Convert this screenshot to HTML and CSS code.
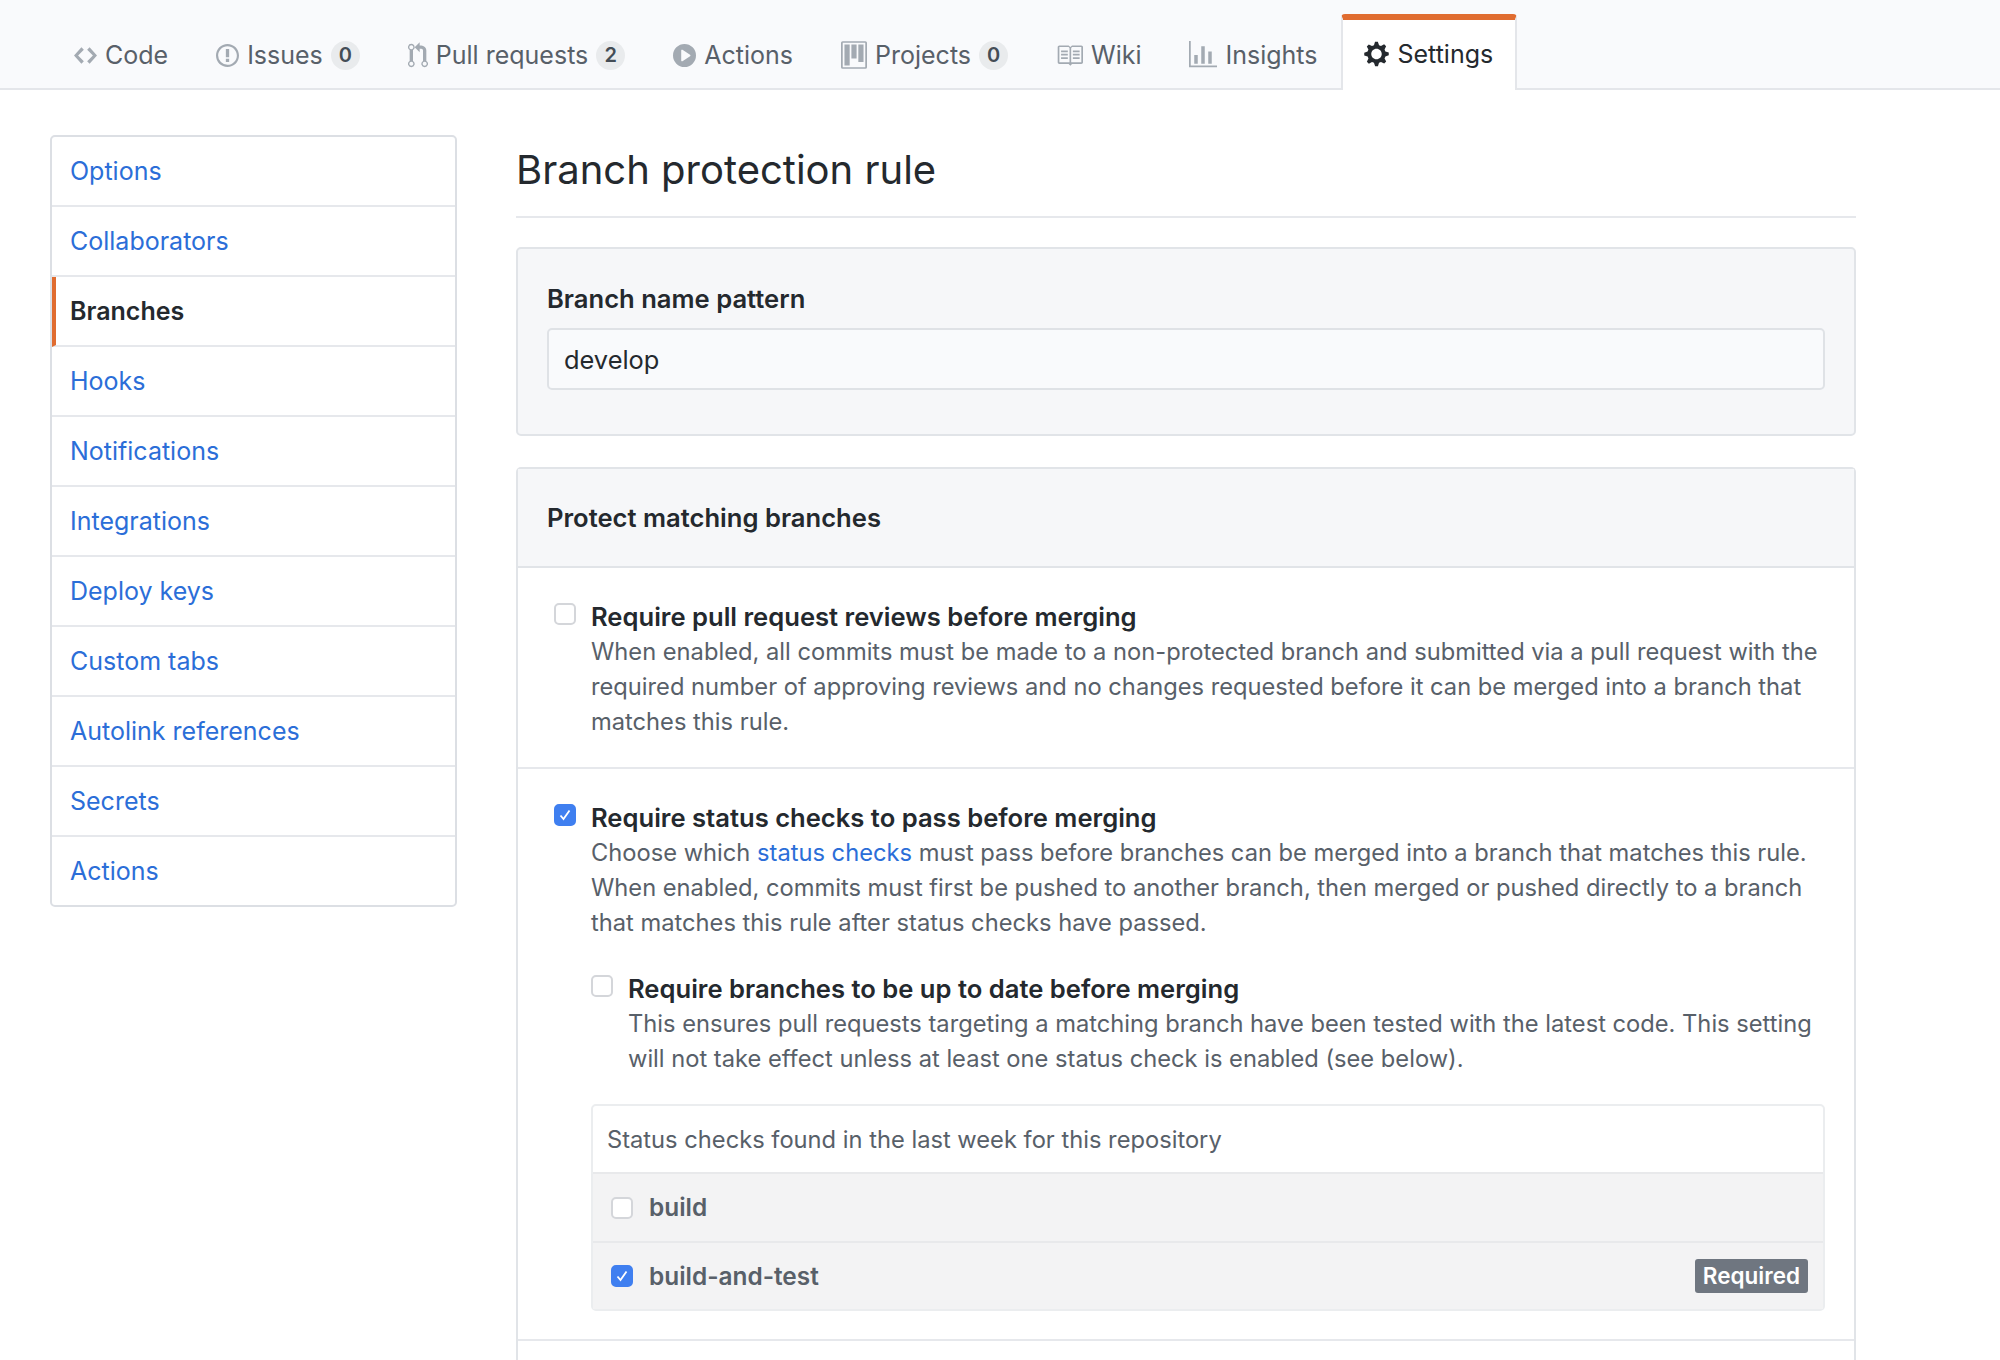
FILE: index.html
```html
<!DOCTYPE html>
<html lang="en">
<head>
    <meta charset="UTF-8">
    <title>Branch protection rule</title>
    <link rel="stylesheet" href="styles.css">
</head>
<body>
    <!-- Repo tabs -->
    <nav class="repo-nav">
        <a class="repo-tab" href="#">
            <svg class="tab-icon" width="23" height="27" viewBox="0 0 14 16"><path d="M9.5 3L8 4.5 11.5 8 8 11.5 9.5 13 14 8 9.5 3zm-5 0L0 8l4.5 5L6 11.5 2.5 8 6 4.5 4.5 3z"/></svg>
            <span>Code</span>
        </a>
        <a class="repo-tab" href="#">
            <svg class="tab-icon" width="23" height="27" viewBox="0 0 14 16"><path d="M7 2.3c3.14 0 5.7 2.56 5.7 5.7s-2.56 5.7-5.7 5.7A5.71 5.71 0 0 1 1.3 8c0-3.14 2.56-5.7 5.7-5.7zM7 1C3.14 1 0 4.14 0 8s3.14 7 7 7 7-3.14 7-7-3.14-7-7-7zm1 3H6v5h2V4zm0 6H6v2h2v-2z"/></svg>
            <span>Issues</span>
            <span class="counter">0</span>
        </a>
        <a class="repo-tab" href="#">
            <svg class="tab-icon" width="20" height="27" viewBox="0 0 12 16"><path d="M11 11.28V5c-.03-.78-.34-1.47-.94-2.06C9.46 2.35 8.78 2.03 8 2H7V0L4 3l3 3V4h1c.27.02.48.11.69.31.21.2.3.42.31.69v6.28A1.993 1.993 0 0 0 10 15a1.993 1.993 0 0 0 1-3.72zm-1 2.92c-.66 0-1.2-.55-1.2-1.2 0-.65.55-1.2 1.2-1.2.65 0 1.2.55 1.2 1.2 0 .65-.55 1.2-1.2 1.2zM4 3c0-1.11-.89-2-2-2a1.993 1.993 0 0 0-1 3.72v6.56A1.993 1.993 0 0 0 2 15a1.993 1.993 0 0 0 1-3.72V4.72c.59-.34 1-.98 1-1.72zm-.8 10c0 .66-.55 1.2-1.2 1.2-.65 0-1.2-.55-1.2-1.2 0-.65.55-1.2 1.2-1.2.65 0 1.2.55 1.2 1.2zM2 4.2C1.34 4.2.8 3.65.8 3c0-.65.55-1.2 1.2-1.2.65 0 1.2.55 1.2 1.2 0 .65-.55 1.2-1.2 1.2z"/></svg>
            <span>Pull requests</span>
            <span class="counter">2</span>
        </a>
        <a class="repo-tab" href="#">
            <svg class="tab-icon" width="23" height="27" viewBox="0 0 14 16"><path fill-rule="evenodd" d="M14 8A7 7 0 1 1 0 8a7 7 0 0 1 14 0zm-8.223 3.482l4.599-3.066a.5.5 0 0 0 0-.832L5.777 4.518A.5.5 0 0 0 5 4.934v6.132a.5.5 0 0 0 .777.416z"/></svg>
            <span>Actions</span>
        </a>
        <a class="repo-tab" href="#">
            <svg class="tab-icon" width="26" height="28" viewBox="0 0 15 16"><path fill-rule="evenodd" d="M10 12h3V2h-3v10zm-4-2h3V2H6v8zm-4 4h3V2H2v12zm-1 1h13V1H1v14zM14 0H1a1 1 0 0 0-1 1v14a1 1 0 0 0 1 1h13a1 1 0 0 0 1-1V1a1 1 0 0 0-1-1z"/></svg>
            <span>Projects</span>
            <span class="counter">0</span>
        </a>
        <a class="repo-tab" href="#">
            <svg class="tab-icon" width="27" height="27" viewBox="0 0 16 16"><path fill-rule="evenodd" d="M3 5h4v1H3V5zm0 3h4V7H3v1zm0 2h4V9H3v1zm11-5h-4v1h4V5zm0 2h-4v1h4V7zm0 2h-4v1h4V9zm2-6v9c0 .55-.45 1-1 1H9.5l-1 1-1-1H2c-.55 0-1-.45-1-1V3c0-.55.45-1 1-1h5.5l1 1 1-1H15c.55 0 1 .45 1 1zm-8 .5L7.5 3H2v9h6V3.5zm7-.5H9.5l-.5.5V12h6V3z"/></svg>
            <span>Wiki</span>
        </a>
        <a class="repo-tab" href="#">
            <svg class="tab-icon" width="28" height="28" viewBox="0 0 16 16"><path d="M16 14v1H0V0h1v14h15zM5 13H3V8h2v5zm4 0H7V3h2v10zm4 0h-2V6h2v7z"/></svg>
            <span>Insights</span>
        </a>
        <a class="repo-tab selected" href="#">
            <svg class="tab-icon" width="25" height="28" viewBox="0 0 14 16"><path fill-rule="evenodd" d="M14 8.77v-1.6l-1.94-.64-.45-1.09.88-1.84-1.13-1.13-1.81.91-1.09-.45-.69-1.92h-1.6l-.63 1.94-1.11.45-1.84-.88-1.13 1.13.91 1.81-.45 1.09L0 7.23v1.59l1.94.64.45 1.09-.88 1.84 1.13 1.13 1.81-.91 1.09.45.69 1.92h1.59l.63-1.94 1.11-.45 1.84.88 1.13-1.13-.92-1.81.47-1.09L14 8.75v.02zM7 11c-1.66 0-3-1.34-3-3s1.34-3 3-3 3 1.34 3 3-1.34 3-3 3z"/></svg>
            <span>Settings</span>
        </a>
    </nav>

    <div class="page">
        <!-- Settings menu -->
        <ul class="menu">
            <li><a href="#">Options</a></li>
            <li><a href="#">Collaborators</a></li>
            <li class="selected"><a href="#">Branches</a></li>
            <li><a href="#">Hooks</a></li>
            <li><a href="#">Notifications</a></li>
            <li><a href="#">Integrations</a></li>
            <li><a href="#">Deploy keys</a></li>
            <li><a href="#">Custom tabs</a></li>
            <li><a href="#">Autolink references</a></li>
            <li><a href="#">Secrets</a></li>
            <li><a href="#">Actions</a></li>
        </ul>

        <main class="content">
            <h2 class="page-title">Branch protection rule</h2>

            <div class="box pattern-box">
                <label class="strong" for="pattern">Branch name pattern</label>
                <input class="pattern-input" id="pattern" type="text" value="develop">
            </div>

            <div class="box rules-box">
                <div class="rules-header strong">Protect matching branches</div>

                <div class="rule">
                    <span class="check"></span>
                    <div class="rule-body">
                        <div class="strong">Require pull request reviews before merging</div>
                        <p class="note">When enabled, all commits must be made to a non-protected branch and submitted via a pull request with the required number of approving reviews and no changes requested before it can be merged into a branch that matches this rule.</p>
                    </div>
                </div>

                <div class="rule">
                    <span class="check checked"><svg width="14" height="14" viewBox="0 0 14 14"><path d="M2.5 7.5l3 3.5 6-8.5" fill="none" stroke="#fff" stroke-width="1.8"/></svg></span>
                    <div class="rule-body">
                        <div class="strong">Require status checks to pass before merging</div>
                        <p class="note">Choose which <a href="#">status checks</a> must pass before branches can be merged into a branch that matches this rule. When enabled, commits must first be pushed to another branch, then merged or pushed directly to a branch that matches this rule after status checks have passed.</p>

                        <div class="sub-rule">
                            <span class="check"></span>
                            <div class="rule-body">
                                <div class="strong">Require branches to be up to date before merging</div>
                                <p class="note">This ensures pull requests targeting a matching branch have been tested with the latest code. This setting will not take effect unless at least one status check is enabled (see below).</p>
                            </div>
                        </div>

                        <div class="status-list">
                            <div class="status-head">Status checks found in the last week for this repository</div>
                            <div class="status-row">
                                <span class="check"></span>
                                <span class="status-name">build</span>
                            </div>
                            <div class="status-row">
                                <span class="check checked"><svg width="14" height="14" viewBox="0 0 14 14"><path d="M2.5 7.5l3 3.5 6-8.5" fill="none" stroke="#fff" stroke-width="1.8"/></svg></span>
                                <span class="status-name">build-and-test</span>
                                <span class="label-required">Required</span>
                            </div>
                        </div>
                    </div>
                </div>

                <div class="rule rule-last"></div>
            </div>
        </main>
    </div>
</body>
</html>
```

FILE: styles.css
```css
/* General */
html, body {
    margin: 0;
    padding: 0;
    height: 1360px;
    overflow: hidden;
}

body {
    font-family: Inter, "Liberation Sans", sans-serif;
    font-size: 23.7px;
    line-height: 35px;
    color: #24292e;
    background-color: #fff;
}

a {
    text-decoration: none;
}

/* Repo tabs */
.repo-nav {
    display: flex;
    align-items: flex-end;
    height: 88px;
    padding-left: 50px;
    background-color: #f9fafc;
    border-bottom: 2px solid #e4e6ea;
}

.repo-tab {
    display: flex;
    align-items: center;
    height: 66px;
    padding: 0 24px;
    color: #586069;
    font-size: 25px;
    white-space: nowrap;
}

.repo-tab.selected {
    height: 68px;
    margin: 0 0 -2px 0;
    padding: 0 22px 2px 21px;
    color: #24292e;
    background-color: #fff;
    border: 2px solid #e4e6ea;
    border-top: 6px solid #e06c30;
    border-bottom: 0;
    border-radius: 4px 4px 0 0;
}

.tab-icon {
    margin-right: 8px;
    fill: #a3aab2;
}

.selected .tab-icon {
    fill: #24292e;
}

.counter {
    min-width: 29px;
    height: 29px;
    margin-left: 8px;
    border-radius: 15px;
    background-color: #e9ebed;
    color: #444d56;
    font-size: 20px;
    font-weight: 600;
    line-height: 29px;
    text-align: center;
}

/* Page columns */
.page {
    display: flex;
    align-items: flex-start;
    gap: 59px;
    padding: 45px 144px 0 50px;
}

/* Settings menu */
.menu {
    flex: 0 0 407px;
    box-sizing: border-box;
    margin: 0;
    padding: 0;
    list-style: none;
    border: 2px solid #dcdfe4;
    border-radius: 5px;
    font-size: 25px;
}

.menu li {
    display: flex;
    align-items: center;
    height: 68px;
    padding-left: 18px;
    border-bottom: 2px solid #e6e8ec;
}

.menu li:last-child {
    height: 68px;
    border-bottom: 0;
}

.menu a {
    color: #2b6ed8;
}

.menu li.selected {
    padding-left: 14px;
    border-left: 4px solid #e06c30;
}

.menu li.selected a {
    color: #24292e;
    font-weight: 600;
}

/* Main column */
.content {
    flex: 1;
}

.page-title {
    box-sizing: border-box;
    height: 83px;
    margin: 0 0 29px 0;
    border-bottom: 2px solid #e6e8ec;
    font-size: 40px;
    font-weight: 400;
    line-height: 70px;
}

.strong {
    display: block;
    font-size: 25.6px;
    font-weight: 600;
}

.box {
    border: 2px solid #e1e4e8;
    border-radius: 5px;
}

.pattern-box {
    box-sizing: border-box;
    height: 189px;
    margin-bottom: 31px;
    padding: 32px 29px 0;
    background-color: #f6f7f9;
}

.pattern-input {
    display: block;
    box-sizing: border-box;
    width: 100%;
    height: 62px;
    margin-top: 12px;
    padding: 0 15px;
    font: inherit;
    font-size: 25.4px;
    color: #24292e;
    background-color: #f9fafc;
    border: 2px solid #dfe2e6;
    border-radius: 5px;
}

.rules-box {
    border-bottom: 0;
    border-radius: 5px 5px 0 0;
}

.rules-header {
    display: flex;
    align-items: center;
    height: 97px;
    padding-left: 29px;
    background-color: #f6f7f9;
    border-bottom: 2px solid #e1e4e8;
}

/* Rules */
.rule {
    display: flex;
    gap: 15px;
    padding: 31px 29px 28px 36px;
    border-bottom: 2px solid #e6e8ec;
}

.rule-last {
    height: 40px;
    border-bottom: 0;
}

.rule-body {
    flex: 1;
    min-width: 0;
}

.note {
    margin: 0;
    color: #586069;
}

.note a {
    color: #2b6ed8;
}

.sub-rule {
    display: flex;
    gap: 15px;
    margin-top: 31px;
}

.check {
    display: flex;
    align-items: center;
    justify-content: center;
    flex: none;
    box-sizing: border-box;
    width: 22px;
    height: 22px;
    margin-top: 4px;
    background-color: #fff;
    border: 2px solid #d4d6da;
    border-radius: 5px;
}

.check.checked {
    background-color: #3f7ff0;
    border-color: #3f7ff0;
}

/* Status checks list */
.status-list {
    margin-top: 28px;
    border: 2px solid #ebedef;
    border-radius: 5px;
    color: #586069;
}

.status-head {
    display: flex;
    align-items: center;
    height: 66px;
    padding-left: 14px;
}

.status-row {
    display: flex;
    align-items: center;
    gap: 16px;
    height: 67px;
    padding: 0 15px 0 18px;
    background-color: #f3f3f4;
    border-top: 2px solid #e8e9eb;
}

.status-row:last-child {
    height: 66px;
}

.status-row .check {
    margin-top: 0;
}

.status-name {
    font-size: 24.4px;
    font-weight: 600;
}

.label-required {
    margin-left: auto;
    padding: 0 8px;
    height: 34px;
    border-radius: 3px;
    background-color: #6f7680;
    color: #fff;
    font-size: 22.5px;
    font-weight: 600;
    line-height: 33px;
}
```
